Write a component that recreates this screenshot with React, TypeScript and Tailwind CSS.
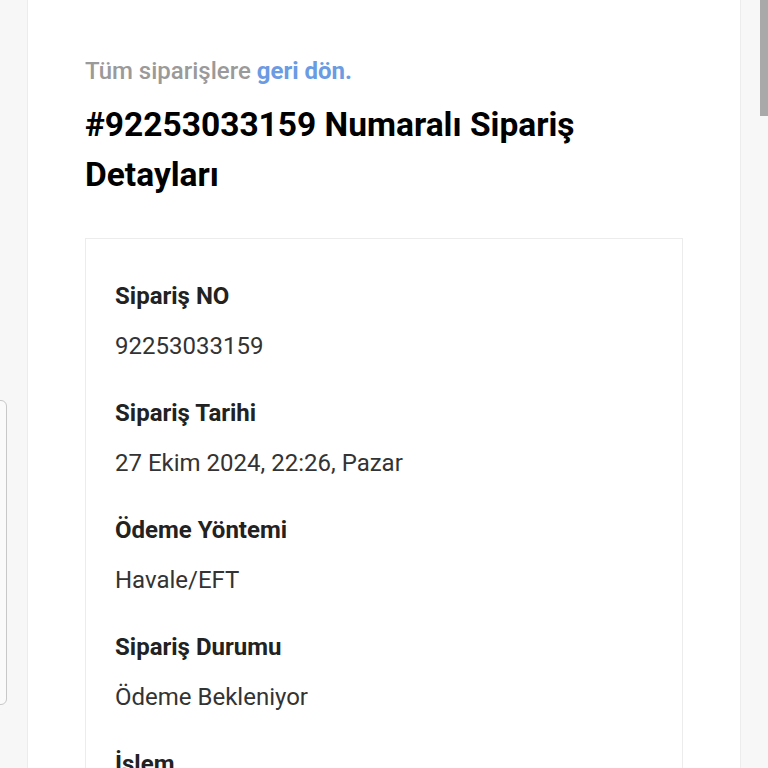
import React from "react"

const rows = [
    { label: "Sipariş NO", value: "92253033159" },
    { label: "Sipariş Tarihi", value: "27 Ekim 2024, 22:26, Pazar" },
    { label: "Ödeme Yöntemi", value: "Havale/EFT" },
    { label: "Sipariş Durumu", value: "Ödeme Bekleniyor" },
    { label: "İşlem", value: "" },
]

const App = () => {
    return (
        <div className="relative h-[768px] overflow-hidden bg-[#f7f7f7] font-['Roboto',sans-serif]">
            {/* left drawer edge */}
            <div className="absolute left-[-20px] top-[400px] h-[305px] w-[27px] rounded-md border border-[#c8c8c8] bg-[#fafafa]" />
            {/* scrollbar thumb */}
            <div className="absolute right-0 top-0 h-[116px] w-[8px] bg-[#a9a9a9]" />

            <div className="mx-[27px] min-h-full border-x border-[#ececec] bg-white px-[57px] pt-[55px]">
                <p className="text-[24px] leading-[32px] font-medium text-[#9a9a9a]">
                    Tüm siparişlere <a href="#" className="font-bold text-[#6b9be3]">geri dön.</a>
                </p>
                <h1 className="mt-[13px] text-[33.5px] leading-[50px] font-bold text-black">
                    #92253033159 Numaralı Sipariş Detayları
                </h1>
                <div className="mt-[38px] border border-[#ececec] px-[29px] pt-[41px]">
                    {rows.map((row) => (
                        <div key={row.label} className="mb-[35px]">
                            <div className="text-[24px] leading-[32px] font-bold text-[#222]">{row.label}</div>
                            {row.value && (
                                <div className="mt-[18px] text-[24px] leading-[32px] text-[#333]">{row.value}</div>
                            )}
                        </div>
                    ))}
                </div>
            </div>
        </div>
    )
}

export default App
